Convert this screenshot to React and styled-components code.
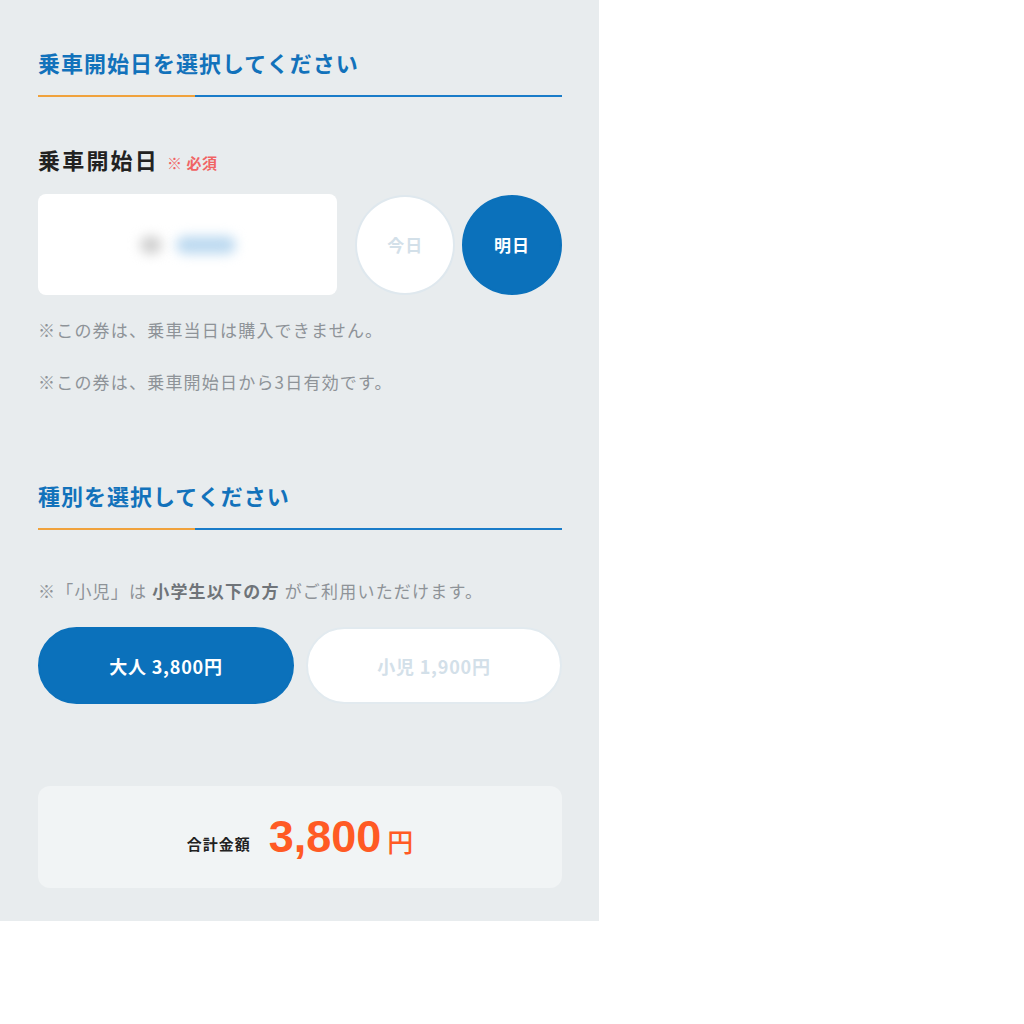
import styled, { createGlobalStyle } from "styled-components";

const GlobalStyle = createGlobalStyle`
  html, body {
    margin: 0;
    padding: 0;
    background: #ffffff;
  }
  body {
    font-family: "Noto Sans CJK JP", "Noto Sans", sans-serif;
  }
`;

const Panel = styled.div`
  width: 599px;
  height: 921px;
  box-sizing: border-box;
  background: #e8ecee;
  padding: 46px 37px 0 38px;
  display: flex;
  flex-direction: column;
`;

const Section = styled.section`
  display: flex;
  flex-direction: column;
  margin-top: ${(p) => p.$mt || 0}px;
`;

const Heading = styled.h2`
  margin: 0;
  font-size: 22px;
  line-height: 32px;
  font-weight: 700;
  color: #1272bb;
  letter-spacing: 1px;
  padding-bottom: 17px;
  border-bottom: 2px solid #1a7cc9;
  position: relative;

  &::after {
    content: "";
    position: absolute;
    left: 0;
    bottom: -2px;
    width: 157px;
    height: 2px;
    background: #f0a23c;
  }
`;

const FieldLabel = styled.div`
  margin-top: 47px;
  display: flex;
  align-items: baseline;
  gap: 8px;
  font-size: 22px;
  letter-spacing: 2.2px;
  font-weight: 700;
  color: #222;
  line-height: 30px;
`;

const Required = styled.span`
  font-size: 15px;
  letter-spacing: 0.5px;
  font-weight: 700;
  color: #f06464;
`;

const DateRow = styled.div`
  margin-top: 16px;
  display: flex;
  align-items: center;
  gap: 7px;
`;

const DateBox = styled.div`
  width: 300px;
  height: 101px;
  margin-right: 11px;
  border-radius: 8px;
  background: #ffffff;
  display: flex;
  align-items: center;
  justify-content: center;
  gap: 14px;
  overflow: hidden;
`;

const Blur = styled.span`
  display: block;
  width: ${(p) => p.$w}px;
  height: 18px;
  border-radius: 9px;
  background: ${(p) => p.$c};
  filter: blur(6px);
`;

const DayButton = styled.button`
  width: 100px;
  height: 100px;
  border-radius: 50%;
  box-sizing: border-box;
  border: 2px solid ${(p) => (p.$active ? "#0b71bb" : "#dfe8ee")};
  background: ${(p) => (p.$active ? "#0b71bb" : "#ffffff")};
  color: ${(p) => (p.$active ? "#ffffff" : "#d3e0e9")};
  font-family: inherit;
  font-size: 17px;
  letter-spacing: 1px;
  font-weight: 700;
  padding: 0;
`;

const Note = styled.p`
  margin: ${(p) => p.$mt || 0}px 0 0;
  font-size: 17px;
  letter-spacing: 1.2px;
  line-height: 24px;
  color: #8e9398;

  b {
    color: #6f7479;
    font-weight: 700;
  }
`;

const TypeRow = styled.div`
  margin-top: 24px;
  display: grid;
  grid-template-columns: 1fr 1fr;
  gap: 12px;
`;

const TypeButton = styled.button`
  height: 77px;
  border-radius: 39px;
  box-sizing: border-box;
  border: 2px solid ${(p) => (p.$active ? "#0b71bb" : "#e2eaef")};
  background: ${(p) => (p.$active ? "#0b71bb" : "#ffffff")};
  color: ${(p) => (p.$active ? "#ffffff" : "#d3e0e9")};
  font-family: inherit;
  font-size: 18px;
  letter-spacing: 0.8px;
  font-weight: 700;
`;

const TotalBox = styled.div`
  margin-top: 82px;
  height: 102px;
  border-radius: 12px;
  background: #f1f4f5;
  display: flex;
  align-items: center;
  justify-content: center;
  gap: 18px;
`;

const TotalLabel = styled.span`
  font-size: 15px;
  letter-spacing: 1px;
  font-weight: 700;
  color: #222;
  margin-top: 12px;
`;

const TotalAmount = styled.span`
  color: #ff5a24;
  font-family: "Liberation Sans", Arial, sans-serif;
  font-size: 45px;
  font-weight: 700;
  display: flex;
  align-items: baseline;
  gap: 6px;
`;

const Yen = styled.span`
  font-family: "Noto Sans CJK JP", sans-serif;
  font-size: 26px;
  font-weight: 500;
`;

const App = () => {
  return (
    <>
      <GlobalStyle />
      <Panel>
        <Section>
          <Heading>乗車開始日を選択してください</Heading>
          <FieldLabel>
            乗車開始日<Required>※ 必須</Required>
          </FieldLabel>
          <DateRow>
            <DateBox>
              <Blur $w={22} $c="#cfcfcf" />
              <Blur $w={60} $c="#bcd9f0" />
            </DateBox>
            <DayButton>今日</DayButton>
            <DayButton $active>明日</DayButton>
          </DateRow>
          <Note $mt={23}>※この券は、乗車当日は購入できません。</Note>
          <Note $mt={28}>※この券は、乗車開始日から3日有効です。</Note>
        </Section>
        <Section $mt={85}>
          <Heading>種別を選択してください</Heading>
          <Note $mt={49}>
            ※「小児」は <b>小学生以下の方</b> がご利用いただけます。
          </Note>
          <TypeRow>
            <TypeButton $active>大人 3,800円</TypeButton>
            <TypeButton>小児 1,900円</TypeButton>
          </TypeRow>
          <TotalBox>
            <TotalLabel>合計金額</TotalLabel>
            <TotalAmount>
              3,800<Yen>円</Yen>
            </TotalAmount>
          </TotalBox>
        </Section>
      </Panel>
    </>
  );
};

export default App;
